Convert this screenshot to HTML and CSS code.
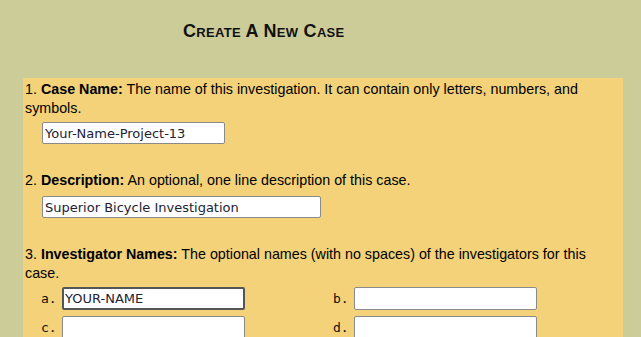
FILE: index.html
```html
<!DOCTYPE html>
<html>
<head>
<meta charset="utf-8">
<link rel="stylesheet" href="styles.css">
</head>
<body>
<div class="title">Create A New Case</div>
<div class="panel">
  <section class="field">
    <p class="desc">1. <b>Case Name:</b> The name of this investigation. It can contain only letters, numbers, and symbols.</p>
    <input class="box w-name" type="text" value="Your-Name-Project-13">
  </section>
  <section class="field">
    <p class="desc">2. <b>Description:</b> An optional, one line description of this case.</p>
    <input class="box w-desc" type="text" value="Superior Bicycle Investigation">
  </section>
  <section class="field">
    <p class="desc">3. <b>Investigator Names:</b> The optional names (with no spaces) of the investigators for this case.</p>
    <div class="inv">
      <span class="lbl">a.</span><input class="box w-inv focus" type="text" value="YOUR-NAME">
      <span class="lbl">b.</span><input class="box w-inv" type="text" value="">
      <span class="lbl">c.</span><input class="box w-inv" type="text" value="">
      <span class="lbl">d.</span><input class="box w-inv" type="text" value="">
    </div>
  </section>
</div>
</body>
</html>
```
FILE: styles.css
```css
html, body {
  margin: 0;
  padding: 0;
  background: #cccc99;
  overflow: hidden;
}
body {
  font-family: "Liberation Sans", Arial, sans-serif;
  font-size: 14.3px;
  color: #000;
}
.title {
  height: 78px;
  box-sizing: border-box;
  padding-top: 21px;
  padding-left: 183px;
  font-family: "Liberation Sans", Arial, sans-serif;
  font-weight: bold;
  font-variant: small-caps;
  font-size: 18px;
  letter-spacing: 0.3px;
  color: #111;
}
.panel {
  margin-left: 23px;
  width: 600px;
  height: 300px;
  background: #f3d27a;
  padding: 2px 10px 0 2px;
  box-sizing: border-box;
}
.field {
  margin-bottom: 27px;
}
.desc {
  margin: 0;
  line-height: 19px;
}
.box {
  display: block;
  box-sizing: border-box;
  height: 22px;
  margin: 4px 0 0 17px;
  padding: 1px 2px;
  border: 1px solid #8a8a8a;
  border-radius: 2px;
  background: #fff;
  font-family: "DejaVu Sans", sans-serif;
  font-size: 13px;
  color: #222233;
  outline: none;
}
.w-name { width: 183px; }
.w-desc { width: 279px; margin-top: 6px; }
.inv {
  display: grid;
  grid-template-columns: 21px 183px 88px 21px 183px;
  grid-auto-rows: 23px;
  row-gap: 6px;
  margin: 4px 0 0 16px;
  align-items: center;
}
.inv .box {
  margin: 0;
  height: 23px;
}
.inv .box:nth-of-type(2n) {
  grid-column: 5;
}
.lbl {
  font-family: "DejaVu Sans Mono", monospace;
  font-size: 13px;
  color: #111;
}
.lbl:nth-of-type(2n) {
  grid-column: 4;
}
.focus {
  border: 2px solid #555;
  padding: 0 1px;
}
```
